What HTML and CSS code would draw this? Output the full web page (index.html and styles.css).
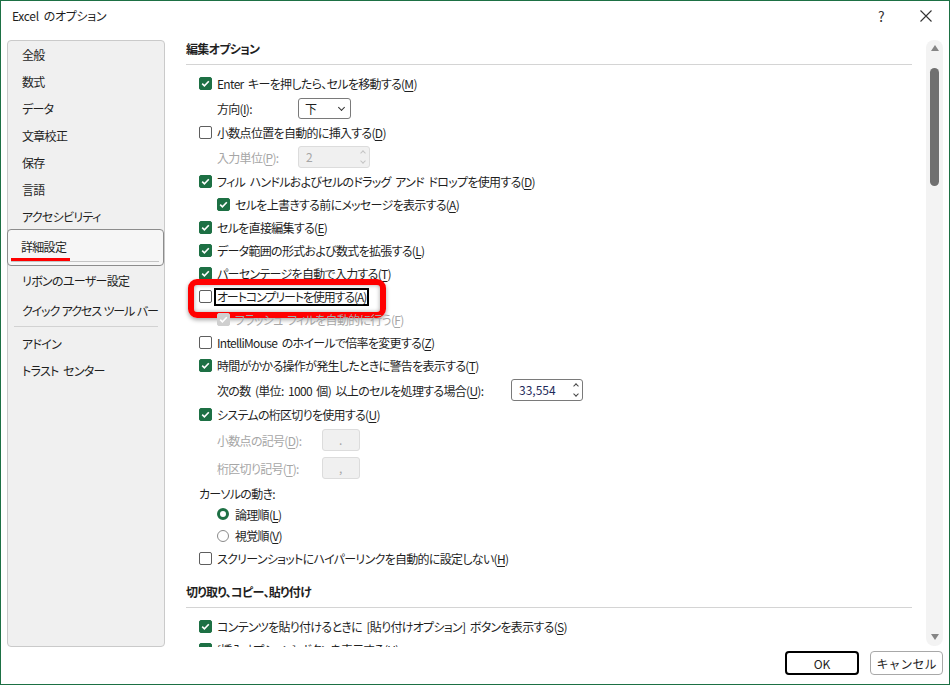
FILE: index.html
```html
<!DOCTYPE html>
<html lang="ja">
<head>
    <meta charset="UTF-8">
    <title>Excel のオプション</title>
    <link rel="stylesheet" href="styles.css">
</head>
<body>
    <div class="window">
        <div class="titlebar">
            <span class="title">Excel のオプション</span>
            <span class="help">?</span>
            <span class="close">
                <svg width="12" height="12" viewBox="0 0 12 12"><path d="M0.5 0.5 L11.5 11.5 M11.5 0.5 L0.5 11.5" stroke="#333" stroke-width="1.1" fill="none"/></svg>
            </span>
        </div>

        <div class="main">
            <nav class="nav">
                <div class="nav-item">全般</div>
                <div class="nav-item">数式</div>
                <div class="nav-item">データ</div>
                <div class="nav-item">文章校正</div>
                <div class="nav-item">保存</div>
                <div class="nav-item">言語</div>
                <div class="nav-item">アクセシビリティ</div>
                <div class="nav-item selected">
                    <span>詳細設定</span>
                    <div class="sel-line"><div class="sel-red"></div></div>
                </div>
                <div class="nav-item ribbon">リボンのユーザー設定</div>
                <div class="nav-item quick">クイック アクセス ツール バー</div>
                <div class="nav-sep"></div>
                <div class="nav-item">アドイン</div>
                <div class="nav-item">トラスト センター</div>
            </nav>

            <div class="pane">
                <div class="scroll">
                    <div class="section-head first">編集オプション</div>
                    <div class="group">
                        <div class="row"><span class="cb on"></span><span>Enter キーを押したら、セルを移動する(<u>M</u>)</span></div>
                        <div class="row tall in2">
                            <span class="label w81">方向(<u>I</u>):</span>
                            <span class="select">下<i class="chev"></i></span>
                        </div>
                        <div class="row"><span class="cb"></span><span>小数点位置を自動的に挿入する(<u>D</u>)</span></div>
                        <div class="row tall in2 off">
                            <span class="label w81">入力単位(<u>P</u>):</span>
                            <span class="spin disabled">2<span class="carets"><i class="up"></i><i class="down"></i></span></span>
                        </div>
                        <div class="row"><span class="cb on"></span><span>フィル ハンドルおよびセルのドラッグ アンド ドロップを使用する(<u>D</u>)</span></div>
                        <div class="row in2"><span class="cb on"></span><span>セルを上書きする前にメッセージを表示する(<u>A</u>)</span></div>
                        <div class="row"><span class="cb on"></span><span>セルを直接編集する(<u>E</u>)</span></div>
                        <div class="row"><span class="cb on"></span><span>データ範囲の形式および数式を拡張する(<u>L</u>)</span></div>
                        <div class="row"><span class="cb on"></span><span>パーセンテージを自動で入力する(<u>T</u>)</span></div>
                        <div class="row marked">
                            <span class="cb"></span><span class="focus">オートコンプリートを使用する(<u>A</u>)</span>
                            <span class="highlight"></span>
                        </div>
                        <div class="row in2 off"><span class="cb on dim"></span><span>フラッシュ フィルを自動的に行う(<u>F</u>)</span></div>
                        <div class="row"><span class="cb"></span><span>IntelliMouse のホイールで倍率を変更する(<u>Z</u>)</span></div>
                        <div class="row"><span class="cb on"></span><span>時間がかかる操作が発生したときに警告を表示する(<u>T</u>)</span></div>
                        <div class="row tall in2">
                            <span class="label w294">次の数 (単位: 1000 個) 以上のセルを処理する場合(<u>U</u>):</span>
                            <span class="spin num">33,554<span class="carets"><i class="up"></i><i class="down"></i></span></span>
                        </div>
                        <div class="row"><span class="cb on"></span><span>システムの桁区切りを使用する(<u>U</u>)</span></div>
                        <div class="row taller in2 off">
                            <span class="label w105">小数点の記号(<u>D</u>):</span>
                            <span class="box">.</span>
                        </div>
                        <div class="row taller in2 off">
                            <span class="label w105">桁区切り記号(<u>T</u>):</span>
                            <span class="box">,</span>
                        </div>
                        <div class="row h22">カーソルの動き:</div>
                        <div class="row h20 in2"><span class="radio on"></span><span>論理順(<u>L</u>)</span></div>
                        <div class="row in2"><span class="radio"></span><span>視覚順(<u>V</u>)</span></div>
                        <div class="row"><span class="cb"></span><span>スクリーンショットにハイパーリンクを自動的に設定しない(<u>H</u>)</span></div>
                    </div>

                    <div class="section-head">切り取り、コピー、貼り付け</div>
                    <div class="group">
                        <div class="row"><span class="cb on"></span><span>コンテンツを貼り付けるときに [貼り付けオプション] ボタンを表示する(<u>S</u>)</span></div>
                        <div class="row"><span class="cb on"></span><span>[挿入オプション] ボタンを表示する(<u>H</u>)</span></div>
                    </div>
                </div>

                <div class="scrollbar">
                    <i class="arrow-up"></i>
                    <div class="thumb"></div>
                    <i class="arrow-down"></i>
                </div>
            </div>
        </div>

        <div class="footer">
            <button class="btn default">OK</button>
            <button class="btn">キャンセル</button>
        </div>
    </div>
</body>
</html>
```

FILE: styles.css
```css
* {
    margin: 0;
    padding: 0;
    box-sizing: border-box;
}

body {
    font-family: "Noto Sans CJK JP", "Noto Sans", sans-serif;
    font-feature-settings: "palt";
    font-size: 12px;
    letter-spacing: -0.7px;
    word-spacing: 2.5px;
    color: #1f1f1f;
    background: #fff;
}

u {
    text-underline-offset: 2px;
}

.window {
    width: 950px;
    height: 685px;
    border: 1px solid #1d7044;
    display: flex;
    flex-direction: column;
    background: #fff;
}

/* title bar */
.titlebar {
    height: 39px;
    display: flex;
    align-items: flex-start;
    padding-left: 11px;
}

.title {
    line-height: 30px;
    letter-spacing: -0.3px;
}

.help {
    margin-left: auto;
    width: 20px;
    text-align: center;
    line-height: 30px;
    font-size: 14px;
    color: #333;
}

.close {
    width: 46px;
    height: 30px;
    margin-left: 12px;
    display: flex;
    align-items: center;
    justify-content: center;
}

/* main area */
.main {
    display: flex;
    height: 607px;
}

.nav {
    width: 158px;
    margin-left: 6px;
    background: #f0f0f0;
    border: 1px solid #cacaca;
    border-radius: 4px;
}

.nav-item {
    height: 27px;
    line-height: 27px;
    padding-left: 14px;
    white-space: nowrap;
}

.nav-item.selected {
    height: 37px;
    line-height: 16px;
    margin-top: -1px;
    margin-left: -1px;
    padding: 9px 0 3px 13px;
    border: 1px solid #8c8c8c;
    border-radius: 4px;
    background: #f6f6f6;
}

.sel-line {
    margin: 3px 4px 0 -10px;
    height: 4px;
    border-bottom: 1px solid #c4c4c4;
}

.sel-red {
    width: 59px;
    height: 3px;
    background: #ff0000;
}

.nav-item.ribbon {
    height: 29px;
    line-height: 29px;
}

.nav-item.quick {
    height: 31px;
    line-height: 31px;
    letter-spacing: -1.1px;
    word-spacing: 1px;
}

.nav-sep {
    height: 1px;
    background: #d2d2d2;
    margin: 0 6px 3px 6px;
}

/* options pane */
.pane {
    flex: 1;
    display: flex;
}

.scroll {
    flex: 1;
    overflow: hidden;
    padding: 0 14px 0 21px;
}

.section-head {
    font-weight: bold;
    line-height: 18px;
    padding-bottom: 6px;
    border-bottom: 1px solid #d4d4d4;
}

.section-head + .group {
    padding-top: 7px;
}

.group + .section-head {
    margin-top: 13px;
}

.row {
    position: relative;
    display: flex;
    align-items: center;
    height: 23px;
    padding-left: 13px;
    white-space: nowrap;
}

.row.tall { height: 26px; }
.row.taller { height: 28px; }
.row.h22 { height: 22px; }
.row.h20 { height: 20px; }
.row.in2 { padding-left: 31px; }
.row.off { color: #a6a6a6; }

.label.w81 { width: 81px; }
.label.w105 { width: 105px; }
.label.w294 { width: 294px; }

/* checkbox */
.cb {
    width: 13px;
    height: 13px;
    flex: none;
    margin-right: 5px;
    border: 1px solid #5e5e5e;
    border-radius: 2px;
    background: #fff;
}

.cb.on {
    border-color: #1d7044;
    background: #1d7044 url("data:image/svg+xml;utf8,<svg xmlns='http://www.w3.org/2000/svg' width='11' height='11' viewBox='0 0 11 11'><path d='M2.2 5.6 L4.4 7.8 L8.8 3.2' stroke='white' stroke-width='1.6' fill='none'/></svg>") center no-repeat;
}

.cb.on.dim {
    border-color: #cfcfcf;
    background-color: #cfcfcf;
}

/* radio */
.radio {
    width: 12px;
    height: 12px;
    flex: none;
    margin-right: 6px;
    border: 1px solid #8a8a8a;
    border-radius: 50%;
}

.radio.on {
    border: 3px solid #1d7044;
}

/* inputs */
.select {
    position: relative;
    width: 53px;
    height: 21px;
    border: 1px solid #7a7a7a;
    border-radius: 3px;
    padding-left: 6px;
    line-height: 19px;
}

.chev {
    position: absolute;
    right: 6px;
    top: 6px;
    width: 5px;
    height: 5px;
    border-right: 1.3px solid #333;
    border-bottom: 1.3px solid #333;
    transform: rotate(45deg);
}

.spin {
    position: relative;
    width: 72px;
    height: 22px;
    border: 1px solid #7a7a7a;
    border-radius: 3px;
    padding-left: 7px;
    line-height: 20px;
    letter-spacing: 0;
}

.spin.disabled {
    border-color: #dcdcdc;
    background: #f0f0f0;
    color: #a6a6a6;
}

.spin.num {
    color: #1e2a5a;
}

.carets {
    position: absolute;
    right: 4px;
    top: 3px;
    display: flex;
    flex-direction: column;
    gap: 4px;
}

.carets i {
    display: block;
    width: 4px;
    height: 4px;
    border-left: 1px solid #444;
    border-top: 1px solid #444;
}

.carets .up { transform: rotate(45deg); margin-top: 1px; }
.carets .down { transform: rotate(225deg); }

.spin.disabled .carets i { border-color: #c4c4c4; }

.box {
    width: 38px;
    height: 22px;
    border: 1px solid #dcdcdc;
    border-radius: 3px;
    background: #f0f0f0;
    color: #a6a6a6;
    line-height: 20px;
    padding-left: 16px;
}

/* annotation */
.focus {
    border: 2px solid #000;
    padding: 0 1px;
    margin-left: -3px;
    line-height: 14px;
    letter-spacing: -1.1px;
}

.highlight {
    position: absolute;
    left: 2px;
    top: -6px;
    width: 198px;
    height: 39px;
    border: 6px solid #ff0000;
    border-radius: 9px;
    box-shadow: 0 2px 4px rgba(0, 0, 0, 0.35), inset 0 0 4px rgba(0, 0, 0, 0.35);
    pointer-events: none;
}

/* scrollbar */
.scrollbar {
    width: 17px;
    height: 606px;
    margin-right: 6px;
    background: #f3f3f3;
    border-radius: 8px;
    display: flex;
    flex-direction: column;
    align-items: center;
}

.arrow-up, .arrow-down {
    width: 0;
    height: 0;
    border-left: 4.5px solid transparent;
    border-right: 4.5px solid transparent;
}

.arrow-up {
    margin-top: 5px;
    border-bottom: 6px solid #858585;
}

.arrow-down {
    margin-top: auto;
    margin-bottom: 6px;
    border-top: 6px solid #858585;
}

.thumb {
    width: 9px;
    height: 118px;
    margin-top: 17px;
    background: #707070;
    border-radius: 5px;
}

/* footer */
.footer {
    flex: 1;
    display: flex;
    justify-content: flex-end;
    gap: 11px;
    padding: 4px 6px 0 0;
}

.btn {
    width: 73px;
    height: 24px;
    border: 1px solid #a8a8a8;
    border-radius: 4px;
    background: #fff;
    font-family: inherit;
    font-size: 12px;
    letter-spacing: 0;
    color: #1f1f1f;
}

.btn.default {
    width: 74px;
    border: 2px solid #000;
}
```
